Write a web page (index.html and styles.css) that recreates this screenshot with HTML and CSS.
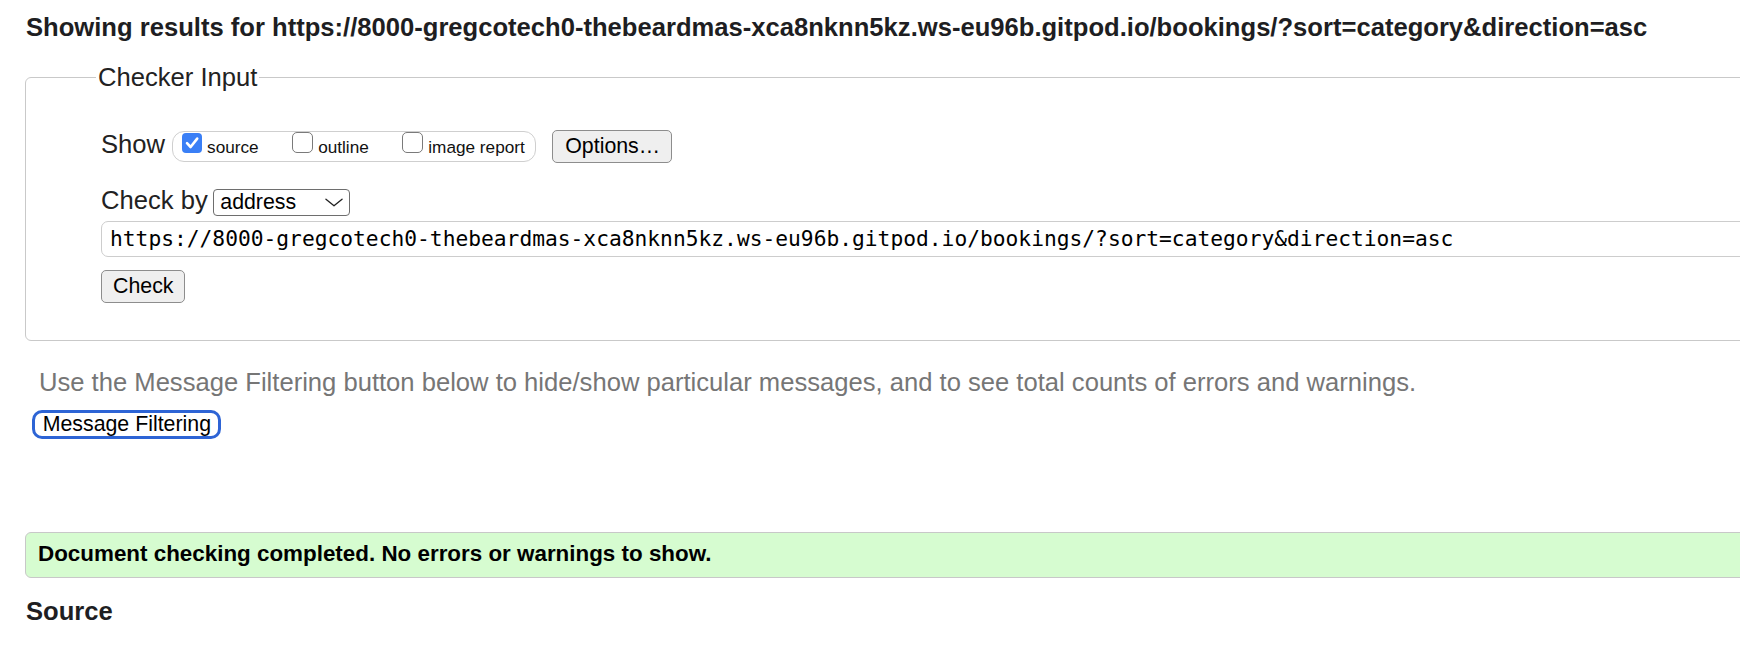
FILE: index.html
```html
<!DOCTYPE html>
<html lang="en">
<head>
<meta charset="utf-8">
<title>Nu Html Checker</title>
<link rel="stylesheet" href="styles.css">
</head>
<body>
<div class="page">
  <h2 class="title">Showing results for https://8000-gregcotech0-thebeardmas-xca8nknn5kz.ws-eu96b.gitpod.io/bookings/?sort=category&amp;direction=asc</h2>
  <fieldset class="checker">
    <legend class="legend">Checker Input</legend>
    <div class="row show-row">
      <span class="label show-label">Show</span>
      <div class="opts">
        <label class="opt"><span class="cb checked"><svg class="tick" viewBox="0 0 20 20" width="20" height="20"><path d="M5 10.2 L8.6 14 L15.2 5.6" fill="none" stroke="#fff" stroke-width="2.6" stroke-linecap="round" stroke-linejoin="round"/></svg></span><span class="opt-text">source</span></label>
        <label class="opt"><span class="cb"></span><span class="opt-text">outline</span></label>
        <label class="opt"><span class="cb"></span><span class="opt-text">image report</span></label>
      </div>
      <button class="btn options-btn" type="button">Options…</button>
    </div>
    <div class="row checkby-row">
      <span class="label checkby-label">Check by</span>
      <div class="select"><span class="select-text">address</span><svg class="chev" viewBox="0 0 19 9" width="18" height="9"><path d="M1 1 L9.5 8 L18 1" fill="none" stroke="#222" stroke-width="1.4" stroke-linecap="round" stroke-linejoin="round"/></svg></div>
    </div>
    <div class="url">https://8000-gregcotech0-thebeardmas-xca8nknn5kz.ws-eu96b.gitpod.io/bookings/?sort=category&amp;direction=asc</div>
    <div class="check-wrap"><button class="btn check-btn" type="button">Check</button></div>
  </fieldset>
  <p class="hint">Use the Message Filtering button below to hide/show particular messages, and to see total counts of errors and warnings.</p>
  <div class="filter-wrap"><button class="filter-btn" type="button">Message Filtering</button></div>
  <div class="success">Document checking completed. No errors or warnings to show.</div>
  <h3 class="source">Source</h3>
</div>
</body>
</html>
```

FILE: styles.css
```css
html {
  overflow: hidden;
}

body {
  margin: 0;
  background: #fff;
  color: #222;
  font-family: "Liberation Sans", Arial, Helvetica, sans-serif;
  font-size: 25.6px;
}

.page {
  width: 1900px;
  padding-left: 25px;
}

.title {
  margin: 0;
  padding: 12px 0 0 1px;
  font-size: 25.6px;
  line-height: 30px;
  font-weight: bold;
  white-space: nowrap;
  color: #1e1e22;
}

.checker {
  margin: 20px 0 0;
  padding: 37px 0 37px 75px;
  border: 1px solid #c9c9c9;
  border-radius: 6px;
  min-width: 0;
}

.legend {
  margin-left: -5px;
  padding: 0 2px;
  font-size: 25.6px;
  line-height: 30px;
}

.row {
  display: flex;
  align-items: baseline;
}

.label {
  line-height: 30px;
}

.show-label {
  margin-right: 7px;
}

.opts {
  display: flex;
  align-items: baseline;
  border: 1px solid #cfcfcf;
  border-radius: 12px;
  padding: 0 10px 4px 9px;
}

.opt {
  display: flex;
  align-items: baseline;
  font-size: 17.2px;
  line-height: 20px;
  color: #111;
}

.opt + .opt {
  margin-left: 33.5px;
}

.cb {
  position: relative;
  width: 19px;
  height: 19px;
  border: 1.5px solid #7a7a7a;
  border-radius: 5px;
  margin-right: 5px;
  background: #fff;
}

.cb.checked {
  width: 20px;
  height: 20px;
  background: #3a7ff6;
  border-color: #3a7ff6;
  border-width: 0;
  border-radius: 4px;
}

.tick {
  position: absolute;
  left: 0;
  top: 0;
}

.btn {
  height: 33px;
  padding: 0 11px 0 12px;
  font-family: "Liberation Sans", Arial, Helvetica, sans-serif;
  font-size: 21.33px;
  color: #000;
  background: #efefef;
  border: 1px solid #8d8d8d;
  border-radius: 5px;
}

.options-btn {
  margin-left: 16.5px;
}

.checkby-row {
  margin-top: 22px;
}

.select {
  margin-left: 5.6px;
  width: 137px;
  height: 27.5px;
  box-sizing: border-box;
  display: flex;
  align-items: center;
  justify-content: space-between;
  padding: 0 6px 0 6px;
  border: 1px solid #6e6e6e;
  border-radius: 4px;
  font-size: 21.33px;
  color: #000;
}

.chev {
  display: block;
}

.url {
  margin-top: 4.3px;
  height: 36px;
  box-sizing: border-box;
  padding-left: 8px;
  border: 1px solid #cdcdcd;
  border-radius: 7px;
  font-family: "DejaVu Sans Mono", "Liberation Mono", monospace;
  font-size: 21.25px;
  line-height: 34px;
  white-space: nowrap;
  color: #000;
}

.check-wrap {
  margin-top: 13.7px;
}

.check-btn {
  padding: 0 11px;
}

.hint {
  margin: 25.6px 0 0;
  padding-left: 14px;
  line-height: 30px;
  color: #767676;
}

.filter-wrap {
  margin-top: 11px;
  padding-left: 7.3px;
}

.filter-btn {
  height: 29px;
  padding: 0 7px 0 7.4px;
  font-family: "Liberation Sans", Arial, Helvetica, sans-serif;
  font-size: 21.33px;
  line-height: 23px;
  color: #000;
  background: #fff;
  border: 3px solid #2d64d5;
  border-radius: 10px;
}

.success {
  margin-top: 93.5px;
  padding: 8px 12px 10px;
  border: 1px solid #c8c8c8;
  border-radius: 6px;
  background: #d6fcd0;
  color: #000;
  font-weight: bold;
  font-size: 22.4px;
  line-height: 26px;
}

.source {
  margin: 17.5px 0 0;
  padding-left: 1px;
  font-size: 25.6px;
  line-height: 30px;
  font-weight: bold;
  color: #1e1e22;
}
```
